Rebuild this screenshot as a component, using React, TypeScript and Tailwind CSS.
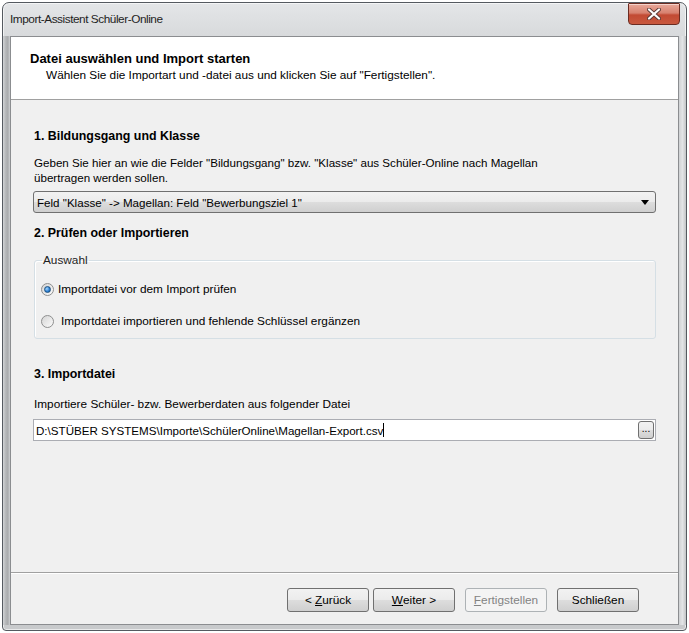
import React from "react";

function CloseButton() {
  return (
    <div className="w-[52px] h-[22px] rounded-b-[4px] rounded-t-[1px] border border-[#6b2c22] bg-[linear-gradient(to_bottom,#e9a99a_0%,#d7816f_45%,#c24a33_55%,#c9593f_100%)] flex items-center justify-center shadow-[inset_0_1px_0_rgba(255,255,255,0.5)]">
      <svg width="14" height="12" viewBox="0 0 14 12">
        <path d="M2 1.5 L12 10.5 M12 1.5 L2 10.5" stroke="#5a3a36" strokeWidth="4" strokeLinecap="round" />
        <path d="M2 1.5 L12 10.5 M12 1.5 L2 10.5" stroke="#ffffff" strokeWidth="2.2" strokeLinecap="round" />
      </svg>
    </div>
  );
}

function Radio({ checked }: { checked?: boolean }) {
  return (
    <span className="w-[13px] h-[13px] rounded-full border border-[#8e8f8f] bg-[linear-gradient(135deg,#d5d5d5,#fbfbfb)] flex items-center justify-center shrink-0">
      {checked && (
        <span className="w-[7px] h-[7px] rounded-full border border-[#1c5180] bg-[radial-gradient(circle_at_35%_35%,#a3d6ff,#2a7dd1_60%,#0f4f94)]" />
      )}
    </span>
  );
}

function Button({ pre, mn, rest, disabled }: { pre?: string; mn?: string; rest?: string; disabled?: boolean }) {
  const cls = disabled
    ? "border-[#adb2b5] bg-[#f4f4f4] text-[#838383]"
    : "border-[#707070] bg-[linear-gradient(to_bottom,#f2f2f2_0%,#ebebeb_50%,#dddddd_51%,#cfcfcf_100%)] text-black";
  return (
    <div className={`w-[82px] h-[24px] rounded-[3px] border flex items-center justify-center whitespace-pre ${cls}`}>
      {pre}
      {mn && <u>{mn}</u>}
      {rest}
    </div>
  );
}

export default function App() {
  return (
    <div className="w-[689px] h-[633px] bg-white p-[2px] font-['Liberation_Sans',Arial,sans-serif] text-[11.8px] leading-[15px] text-black">
      <div className="h-full flex flex-col rounded-t-[7px] rounded-b-[4px] border border-[#555a60] bg-[linear-gradient(to_bottom,#e4e6e8_0%,#d6d8da_6%,#d0d2d4_40%,#c8cacc_100%)] shadow-[inset_0_0_0_1px_rgba(255,255,255,0.6)]">
        {/* title bar */}
        <div className="h-[33px] flex items-start pl-[7px] pr-[6px]">
          <span className="mt-[9px] text-[11.8px] tracking-[-0.45px] text-[#1e1e1e]">Import-Assistent Schüler-Online</span>
          <div className="ml-auto">
            <CloseButton />
          </div>
        </div>

        <div className="flex-1 flex pb-[5px]">
          <div className="w-[7px] bg-[linear-gradient(to_right,#d2d4d6_0%,#b4b6b8_40%,#a9abad_70%,#cfd1d3_100%)]" />
          {/* client */}
          <div className="flex-1 flex flex-col border border-[#8b8d90] bg-[#f0f0f0]">
            {/* header */}
            <div className="h-[63px] bg-white border-b border-[#a0a0a0] pl-[19px] pt-[14px]">
              <div className="font-bold text-[13px]">Datei auswählen und Import starten</div>
              <div className="mt-[2px] pl-[16px]">Wählen Sie die Importart und -datei aus und klicken Sie auf "Fertigstellen".</div>
            </div>

            {/* content */}
            <div className="flex-1 px-[22px] pt-[29px]">
              <div className="font-bold text-[12.4px] pl-[1px]">1. Bildungsgang und Klasse</div>
              <div className="mt-[11px] pl-[1px] text-[11.6px]">
                Geben Sie hier an wie die Felder "Bildungsgang" bzw. "Klasse" aus Schüler-Online nach Magellan
                <br />
                übertragen werden sollen.
              </div>
              <div className="mt-[6px] h-[22px] rounded-[3px] border border-[#707070] bg-[linear-gradient(to_bottom,#f2f2f2_0%,#ebebeb_50%,#dddddd_51%,#cfcfcf_100%)] flex items-center pl-[3px] pr-[6px]">
                <span className="text-[11.6px]">Feld "Klasse" -&gt; Magellan: Feld "Bewerbungsziel 1"</span>
                <svg className="ml-auto" width="8" height="5" viewBox="0 0 8 5">
                  <path d="M0 0 H8 L4 5 Z" fill="#000" />
                </svg>
              </div>

              <div className="mt-[13px] font-bold text-[12.4px] pl-[1px]">2. Prüfen oder Importieren</div>
              <fieldset className="mt-[12px] ml-[1px] h-[86px] rounded-[3px] border border-[#d5dfe5] shadow-[inset_1px_1px_0_#ffffff] px-[6px]">
                <legend className="ml-[1px] px-[1px] text-[#1e1e1e]">Auswahl</legend>
                <div className="mt-[14px] flex items-center gap-[4px]">
                  <Radio checked />
                  <span>Importdatei vor dem Import prüfen</span>
                </div>
                <div className="mt-[17px] flex items-center gap-[7px]">
                  <Radio />
                  <span>Importdatei importieren und fehlende Schlüssel ergänzen</span>
                </div>
              </fieldset>

              <div className="mt-[28px] font-bold text-[12.4px] pl-[1px]">3. Importdatei</div>
              <div className="mt-[15px] pl-[1px]">Importiere Schüler- bzw. Bewerberdaten aus folgender Datei</div>
              <div className="mt-[7px] h-[22px] border border-[#abadb3] bg-white flex items-center pl-[2px] pr-[1px]">
                <span className="text-[11.6px]">D:\STÜBER SYSTEMS\Importe\SchülerOnline\Magellan-Export.csv</span>
                <span className="w-[1px] h-[14px] bg-black" />
                <div className="ml-auto w-[16px] h-[18px] rounded-[3px] border border-[#707070] bg-[linear-gradient(to_bottom,#f2f2f2_0%,#ebebeb_50%,#dddddd_51%,#cfcfcf_100%)] flex items-center justify-center text-[10px] leading-[10px] pb-[3px]">
                  ...
                </div>
              </div>
            </div>

            {/* footer */}
            <div className="h-[52px] border-t border-[#a0a0a0] shadow-[inset_0_1px_0_#ffffff] flex items-start justify-end pt-[15px] pr-[39px]">
              <Button pre="< " mn="Z" rest="urück" />
              <div className="ml-[4px]">
                <Button mn="W" rest="eiter >" />
              </div>
              <div className="ml-[10px]">
                <Button mn="F" rest="ertigstellen" disabled />
              </div>
              <div className="ml-[10px]">
                <Button rest="Schließen" />
              </div>
            </div>
          </div>
          <div className="w-[7px] bg-[linear-gradient(to_right,#cfd1d3_0%,#e2e4e6_50%,#c3c5c7_100%)]" />
        </div>
      </div>
    </div>
  );
}
